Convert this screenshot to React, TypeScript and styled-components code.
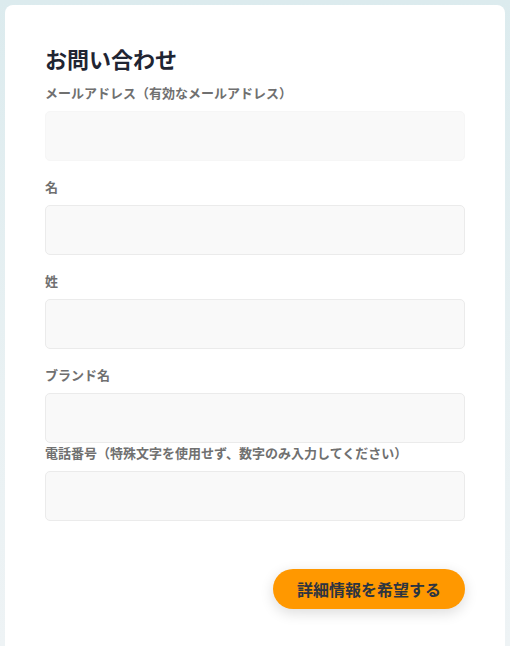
import styled, { createGlobalStyle } from 'styled-components';

const GlobalStyle = createGlobalStyle`
  html, body {
    margin: 0;
    padding: 0;
    height: 100%;
  }
  body {
    background: linear-gradient(180deg, #dcebee 0%, #e9f1f3 60%, #eef3f5 100%);
    font-family: "Noto Sans CJK JP", "Noto Sans", sans-serif;
    overflow: hidden;
  }
`

const Page = styled.div`
  padding: 5px 5px 0;
  height: 100vh;
  box-sizing: border-box;
`

const Card = styled.form`
  background: #fff;
  border-radius: 8px 8px 0 0;
  padding: 38px 40px 0;
  height: 100%;
  box-sizing: border-box;
  display: flex;
  flex-direction: column;
`

const Title = styled.h1`
  margin: 0 0 10px;
  font-size: 22px;
  line-height: 30px;
  font-weight: 700;
  color: #1f2533;
`

const Field = styled.div<{ $tight?: boolean }>`
  display: flex;
  flex-direction: column;
  margin-top: ${p => (p.$tight ? '0' : '16px')};
  &:first-of-type {
    margin-top: 0;
  }
`

const Label = styled.label`
  font-size: 13px;
  line-height: 20px;
  font-weight: 600;
  color: #707070;
  margin-bottom: 8px;
  white-space: nowrap;
`

const Input = styled.input<{ $plain?: boolean }>`
  height: 50px;
  box-sizing: border-box;
  border: 1px solid ${p => (p.$plain ? '#f6f6f6' : '#ebebeb')};
  border-radius: 5px;
  background: #f9f9f9;
  padding: 0 14px;
  font-size: 14px;
  outline: none;
`

const Actions = styled.div`
  display: flex;
  justify-content: flex-end;
  margin-top: 48px;
`

const SubmitButton = styled.button`
  width: 192px;
  height: 40px;
  border: none;
  border-radius: 20px;
  background: #ff9800;
  color: #2d3440;
  font-family: "Noto Sans CJK JP", "Noto Sans", sans-serif;
  font-size: 16px;
  font-weight: 700;
  cursor: pointer;
  box-shadow: 0 4px 14px rgba(0, 0, 0, 0.14);
`

const fields = [
  { label: 'メールアドレス（有効なメールアドレス）', plain: true },
  { label: '名' },
  { label: '姓' },
  { label: 'ブランド名' },
  { label: '電話番号（特殊文字を使用せず、数字のみ入力してください）', tight: true },
]

const App = () => {
  return (
    <>
      <GlobalStyle />
      <Page>
        <Card onSubmit={e => e.preventDefault()}>
          <Title>お問い合わせ</Title>
          {fields.map(f => (
            <Field key={f.label} $tight={f.tight}>
              <Label>{f.label}</Label>
              <Input $plain={f.plain} />
            </Field>
          ))}
          <Actions>
            <SubmitButton type="submit">詳細情報を希望する</SubmitButton>
          </Actions>
        </Card>
      </Page>
    </>
  )
}

export default App;
